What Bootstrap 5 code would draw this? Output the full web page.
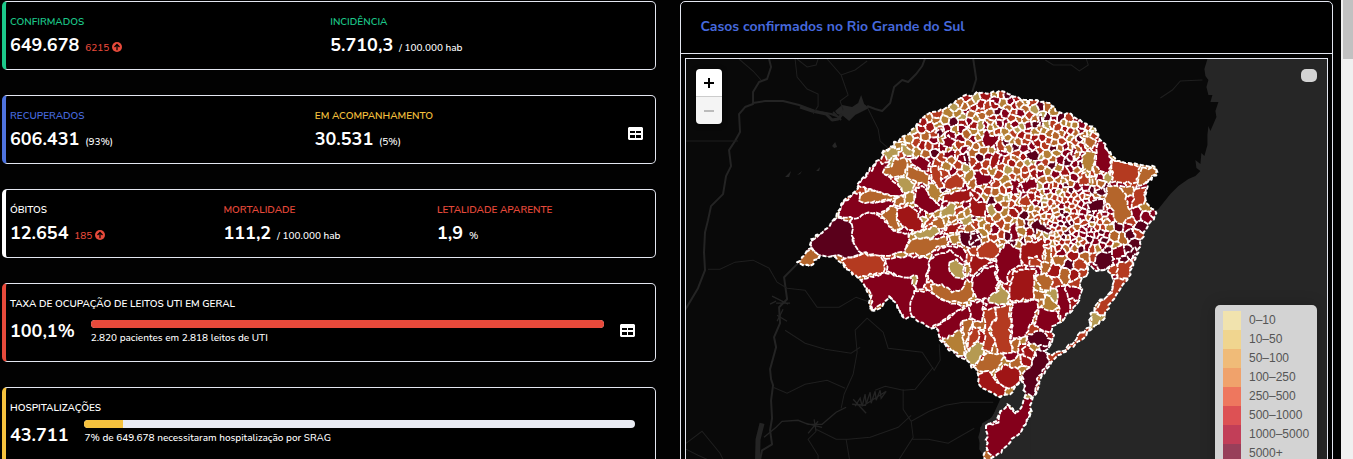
<!DOCTYPE html>
<html lang="pt-BR">
<head>
<meta charset="utf-8">
<meta name="viewport" content="width=device-width, initial-scale=1">
<title>Painel Coronavírus RS</title>
<link href="https://cdn.jsdelivr.net/npm/bootstrap@5.3.0/dist/css/bootstrap.min.css" rel="stylesheet">
<style>
body{background:#020202;color:#fff;font-family:Nunito,"Open Sans",sans-serif}
.page{padding:1px 0 0 2px}
.cols{gap:24px;padding-right:8px}
.panel{background:#000;border:1px solid #e3e6f0;border-radius:5px}
.stat{border-left:4px solid;min-height:69px;padding:12px 4px 6px;margin-bottom:25px}
.stat-tall{min-height:79px}
.stat .row>*{padding:0}
.edge-green{border-left-color:#1cc88a}
.edge-blue{border-left-color:#4e73df}
.edge-white{border-left-color:#fff}
.edge-red{border-left-color:#e74a3b}
.edge-yellow{border-left-color:#f6c23e}
.lbl{font-size:10px;line-height:16px;font-weight:600}
.num{font-size:18px;line-height:30px;height:32px;font-weight:700;white-space:nowrap}
.num small{font-size:10px;font-weight:500;margin-left:1px}
.t-green{color:#1cc88a}.t-blue{color:#4669dc}.t-yellow{color:#f6c23e}.t-red{color:#e74a3b}
.note{font-size:10px;line-height:12px;font-weight:500}
.progress{height:8px;border-radius:6px;background:#eaecf4}
.icon-btn{background:none;border:0;padding:0;line-height:0;color:#fff}
.arrow{width:10px;height:10px;vertical-align:-1px}
.map-head{height:52px;padding:0 20px;border-bottom:1px solid #e3e6f0;font-size:14px;font-weight:700}
.map-box{height:422px;border:1px solid #e3e6f0;background:#090909}
.map-box>svg{width:100%;height:100%;display:block}
.zoom-ctl{left:10px;top:10px;width:26px;border-radius:4px;overflow:hidden;box-shadow:0 1px 5px rgba(0,0,0,.65)}
.zoom-ctl button{width:26px;height:27px;border:0;padding:0;background:#fff;color:#000;line-height:0}
.zoom-ctl button+button{border-top:1px solid #ccc;height:28px;background:#f4f4f4;color:#bbb}
.info-ctl{right:10px;top:10px;width:16px;height:13px;border-radius:5px;background:#d3d3d3}
.legend-ctl{right:10px;bottom:10px;width:102px;padding:6px 8px;border-radius:5px;background:#d3d3d3;color:#555;font:12px/19px "Liberation Sans",Arial,sans-serif;white-space:nowrap;box-shadow:0 0 15px rgba(0,0,0,.2)}
.swatch{width:18px;height:19px;flex-shrink:0}
.scroller{width:12px;background:#f0f0f0;padding-left:2px}
.thumb{height:59px;background:#c1c1c1}
#cells path,#towns path,#outline path{stroke:#fff;stroke-width:1.8;stroke-dasharray:5 1;stroke-linejoin:round}
#outline path{fill:none;stroke-width:2;stroke-dasharray:4 2}
</style>
</head>
<body>
<div class="d-flex vh-100 overflow-hidden">
<main class="page flex-fill">
<div class="cols d-flex">
<section class="flex-fill w-50">
  <div class="panel stat edge-green">
    <div class="row g-0">
      <div class="col"><div class="lbl t-green">CONFIRMADOS</div><div class="num">649.678 <small class="t-red">6215 <svg class="arrow" viewBox="0 0 16 16"><circle cx="8" cy="8" r="8" fill="#e74a3b"/><path d="M8 13V4M4 8l4-4 4 4" fill="none" stroke="#000" stroke-width="2"/></svg></small></div></div>
      <div class="col"><div class="lbl t-green">INCIDÊNCIA</div><div class="num">5.710,3 <small>/ 100.000 hab</small></div></div>
    </div>
  </div>
  <div class="panel stat edge-blue">
    <div class="row g-0 align-items-center">
      <div class="col"><div class="lbl t-blue">RECUPERADOS</div><div class="num">606.431 <small>(93%)</small></div></div>
      <div class="col"><div class="lbl t-yellow">EM ACOMPANHAMENTO</div><div class="num">30.531 <small>(5%)</small></div></div>
      <div class="col-auto"><button class="icon-btn mx-2" type="button" aria-label="Tabela"><svg width="15" height="13" viewBox="0 0 15 13"><path fill="currentColor" fill-rule="evenodd" d="M1 0h13l1 1v11l-1 1H1l-1-1V1zM2 4v2h5V4zm6 0v2h5V4zM2 8v3h5V8zm6 0v3h5V8z"/></svg></button></div>
    </div>
  </div>
  <div class="panel stat edge-white">
    <div class="row g-0">
      <div class="col"><div class="lbl">ÓBITOS</div><div class="num">12.654 <small class="t-red">185 <svg class="arrow" viewBox="0 0 16 16"><circle cx="8" cy="8" r="8" fill="#e74a3b"/><path d="M8 13V4M4 8l4-4 4 4" fill="none" stroke="#000" stroke-width="2"/></svg></small></div></div>
      <div class="col"><div class="lbl t-red">MORTALIDADE</div><div class="num">111,2 <small>/ 100.000 hab</small></div></div>
      <div class="col"><div class="lbl t-red">LETALIDADE APARENTE</div><div class="num">1,9 <small>%</small></div></div>
    </div>
  </div>
  <div class="panel stat stat-tall edge-red">
    <div class="lbl">TAXA DE OCUPAÇÃO DE LEITOS UTI EM GERAL</div>
    <div class="d-flex align-items-center">
      <div class="num me-3 mt-1">100,1%</div>
      <div class="flex-fill pt-1"><div class="progress" role="progressbar" aria-label="Leitos UTI"><div class="progress-bar" style="width:100%;background:#e74a3b"></div></div><div class="note mt-1">2.820 pacientes em 2.818 leitos de UTI</div></div>
      <button class="icon-btn mx-3" type="button" aria-label="Tabela"><svg width="15" height="13" viewBox="0 0 15 13"><path fill="currentColor" fill-rule="evenodd" d="M1 0h13l1 1v11l-1 1H1l-1-1V1zM2 4v2h5V4zm6 0v2h5V4zM2 8v3h5V8zm6 0v3h5V8z"/></svg></button>
    </div>
  </div>
  <div class="panel stat stat-tall edge-yellow">
    <div class="lbl">HOSPITALIZAÇÕES</div>
    <div class="d-flex align-items-start">
      <div class="num me-3 mt-1">43.711</div>
      <div class="flex-fill me-3 pt-1"><div class="progress" role="progressbar" aria-label="Hospitalizações"><div class="progress-bar" style="width:7%;background:#f6c23e"></div></div><div class="note mt-1">7% de 649.678 necessitaram hospitalização por SRAG</div></div>
    </div>
  </div>
</section>
<section class="flex-fill w-50">
  <div class="panel">
    <h6 class="map-head t-blue d-flex align-items-center m-0">Casos confirmados no Rio Grande do Sul</h6>
    <div class="p-1 pb-4">
    <div class="map-box position-relative overflow-hidden" id="map">
      <svg viewBox="686 60 641 420" preserveAspectRatio="xMidYMin slice" role="img" aria-label="Mapa">
        <path fill="#262626" d="M1207 60L1204 70 1205 77 1208 81 1206 88 1208 96 1212 96 1210 103 1218 103 1215 112 1216 118 1213 125 1210 132 1208 127 1207 136 1207 146 1204 157 1201 154 1200 165 1195 161 1196 169 1200 172 1195 177 1188 180 1178 187 1170 195 1158 210 1154 213 1110 250 1085 265 1050 330 1040 355 1020 380 1003 400 990 420 980 428 979 450 985 459 975 482 1330 482V60z"/>
        <path fill="#262626" d="M1010 392L1000 400 992 418 982 424 978 438 982 452 985 470H1030V400z"/>
        <path fill="#262626" d="M804 79l-12 6M835 112l7-6 10 2 6-4 3-8 3 9 5 4-6 3-8 4-6 6-6-5-6-2zM832 147l3-4 2 5-3 1zM785 178l6-6-2 6zM797 176l5-4-2 3zM816 172l4-4-1 4z"/>
        <g fill="none" stroke="#242424" stroke-width="2" stroke-linejoin="round">
          <path d="M769 60l2 8-4 12-8 3-6 10 0 12-8 3-6 7 1 18-5 9-6 9 2 16-5 10-3 18-12 12-3 14-3 12-1 20 1 18-7 18-13 22M753 104l12-2 18 0 16 4 16 6 16 3 8 3M833 113l8 8M867 107l8 3 7 2 8-8 4-16 8-7 6 2 8-8 6-8 3-8 12-5M973 60l3 20-4 13"/>
          <path stroke-width="3" d="M800 108l12 4 14 3 6 6 6-1 4-5"/>
          <path d="M798 264l-14 14 3 22-8 8 1 16-6 14 2 10-6 22 1 10 2 6-2 15 1 18-2 12 2 14-10 6-3 14"/>
          <path stroke-width="5" d="M762 424l-4 16-1 40"/>
        </g>
        <g fill="none" stroke="#242424" stroke-width="1.3">
          <path d="M776 304l14 0m-14-2l-6 3m2-8l16 8M777 316l10 6m-4-12l-6 12M764 438l12-10 6-6 16-1 10 4 14 0 14-12 10-5M852 405l14 1M853 400l13 14m-11-7l5-8 2 8 3-12 1 10 4-12 1 11 4-12 1 9 4-10 1 8 5-7-22 14M806 424l16 4m-14 6l10-12m-4-2l2 12"/>
        </g>
        <g fill="none" stroke="#1f1f1f" stroke-width="1">
          <path d="M686 142h52M739 60l14 12 8 9M795 60l2 18 10 12 11 5v12l-5 8M797 60l10 8 9-2 2-6M827 60l14 16 14-5 12-9M841 76l7 20-8 6 3 9M868 110l10 20 2 12 8 7M1045 61l8 5 18 0 8 6 9-6-2-6M1160 99l12-8 8-9 22-1"/>
          <path d="M708 270l12 0 15-7 18-2 16 8 8 14 10 6 18 2 12 17 22 0 17-10 14 5M785 331l20 13 20 6 26 4 9-6M867 319l-12 12 2 22-4 22-9 20-3 14M867 319l16 14 5 16 34 4 12 18 6-10-1-16M933 368l-18 22-12 1-18-4-10 4M773 388l14 6 18-9 22-4 18 8M903 390l0 20 8 12 18-10 16-6 18-3 30 0M911 422l2 16-14 22M816 430l20 10 12 0 22-2 28-10 13-12M912 440l16 0 20 4 26-15M816 432l-8 8 10 16v20M846 440l5 30M686 444l16-12 18 22 8 16M686 450l12 6 18 8"/>
        </g>
        <defs><clipPath id="rs"></clipPath></defs>
        <g clip-path="url(#rs)"><rect x="780" y="80" width="400" height="400" fill="#fff"/><g id="cells"></g><g id="towns"></g></g>
        <g id="outline"></g>
      </svg>
      <div class="zoom-ctl position-absolute"><button type="button" aria-label="Aproximar"><svg width="12" height="12"><path d="M6 1v10M1 6h10" stroke="currentColor" stroke-width="2"/></svg></button><button type="button" aria-label="Afastar"><svg width="12" height="12"><path d="M1 6h10" stroke="currentColor" stroke-width="2"/></svg></button></div>
      <div class="info-ctl position-absolute"></div>
      <div class="legend-ctl position-absolute" id="legend"></div>
    </div>
    </div>
  </div>
</section>
</div>
</main>
<div class="scroller flex-shrink-0" aria-hidden="true"><div class="thumb"></div></div>
</div>
<script src="https://cdn.jsdelivr.net/npm/bootstrap@5.3.0/dist/js/bootstrap.bundle.min.js"></script>
<script>
const legend = [['0–10','#f1e3ae'],['10–50','#f0d58f'],['50–100','#f0bb78'],['100–250','#f0a26b'],['250–500','#ee775e'],['500–1000','#dd5154'],['1000–5000','#c23e58'],['5000+','#983f5a']];
document.getElementById('legend').innerHTML = legend.map(([t,c]) => `<div class="d-flex"><span class="swatch me-2" style="background:${c}"></span>${t}</div>`).join('');

const fills = {D:'#5a001b',R:'#84001b',M:'#9f1516',O:'#b43a20',B:'#b4652b',Y:'#b47f35',K:'#b59a52',W:'#262626'};
const nums = s => s.trim().split(/[ ,]+/).map(Number);
const pairs = s => { const n = nums(s), r = []; for (let i = 0; i < n.length; i += 2) r.push([n[i], n[i+1]]); return r; };

// State border and the lagoon inside it
const border = pairs('797,263 802,258 811,249 811,240 824,231 836,218 841,205 858,189 857,186 876,162 881,160 882,154 900,140 909,135 912,130 924,118 925,116 944,110 954,104 963,97 980,94 990,94 1005,93 1020,100 1030,101 1050,104 1058,113 1071,115 1080,121 1095,130 1100,141 1110,153 1116,162 1125,164 1141,166 1155,168 1157,173 1146,184 1145,200 1149,207 1156,214 1147,228 1141,240 1135,260 1128,278 1118,293 1108,306 1105,318 1090,331 1075,345 1057,356 1048,368 1040,380 1037,392 1032,400 1030,415 1022,430 1010,443 995,457 985,463 984,454 987,450 986,425 996,422 1000,412 1007,405 1014,413 1018,412 1025,396 1022,378 1018,385 1010,395 1000,398 985,390 978,383 977,372 965,360 955,355 942,343 938,331 925,326 914,318 905,320 895,303 889,297 880,309 870,311 869,295 858,279 843,265 832,257 820,256 810,267');
const lagoon = pairs('1086,277 1088,270 1085,262 1090,266 1096,272 1108,268 1111,275 1112,286 1106,298 1098,303 1094,312 1090,314 1090,328 1080,333 1072,345 1062,352 1052,356 1044,352 1050,346 1052,342 1052,327 1065,318 1073,308 1079,301 1082,290 1080,283');

// Larger municipalities: [origin x, origin y, outlines in thirds of a unit]
const areas = [[790,80,`D 65,485 85,470 105,450 140,415 155,418 180,430 190,450 188,490 215,525 190,532 165,540 145,528 110,535 92,530 65,505
B 20,545 45,520 65,508 88,530 85,555 55,562 30,555
R 190,415 235,400 265,408 300,440 315,455 355,462 358,485 345,520 310,525 285,530 250,525 215,522 190,490 188,450 180,425
R 145,412 152,380 190,340 210,340 215,365 250,372 315,365 310,380 270,405 235,400 200,418 160,415
R 195,320 250,265 262,240 275,255 300,250 280,280 300,295 312,310 335,335 345,345 325,352 300,350 230,330
B 210,350 235,335 300,350 325,352 300,362 225,372 207,365
K 275,225 300,208 328,208 325,230 290,242
B 312,238 345,235 352,265 340,290 305,295 278,280 285,265 305,262
K 335,195 372,215 370,235 350,232 335,215
R 358,240 395,232 420,250 415,275 395,278 365,255
B 352,262 418,288 415,320 385,312 348,295
K 312,298 345,295 375,315 365,340 345,342 325,320
R 375,325 395,320 420,345 440,370 455,380 440,395 415,405 370,375
Y 345,345 370,340 372,365 345,378 340,365
B 315,360 335,348 342,375 315,380
Y 418,312 440,320 458,345 438,372 415,345
O 425,262 445,262 462,325 445,330 425,300
O 470,300 500,282 520,300 518,325 480,332 462,325
M 462,345 540,325 568,345 560,365 500,370 458,368
Y 525,285 545,268 552,290 535,315 522,305
B 272,408 300,380 322,388 320,425 330,450 310,455 290,425
M 322,388 360,380 385,405 400,450 375,460 335,440 320,420
K 365,465 400,455 435,440 450,460 425,478 390,480
B 345,510 370,480 430,478 470,472 475,495 440,502 405,530 345,522
K 455,390 480,370 498,380 490,410 460,415 450,405
O 405,430 430,405 440,420 405,445
K 508,420 545,405 550,430 520,440
M 450,465 480,435 515,430 500,460
D 505,460 560,452 575,470 575,495 540,508 510,490
Y 478,470 508,465 512,490 485,495
R 425,520 450,505 510,500 530,525 520,560 470,570 430,560 420,540
R 455,180 475,168 495,190 485,208 460,200
R 455,215 495,215 495,235 460,235
D 520,225 535,205 540,260 525,255
D 435,160 455,150 460,165 445,175
O 155,542 215,525 270,530 285,550 280,580 220,590 200,600 170,570`],
[790,260,`R 205,65 285,42 330,50 360,55 378,90 372,130 365,195 345,185 298,112 290,130 245,155 240,100
R 285,0 350,-10 425,0 415,15 410,60 400,90 378,90 380,50 340,55 290,35
R 420,0 480,-30 530,10 550,40 545,65 515,95 480,100 430,75 415,60
K 478,10 500,0 522,25 518,60 495,55 478,35
Y 522,15 545,15 545,35 525,55
B 420,78 455,75 485,100 515,90 530,60 548,70 548,115 520,132 465,125 425,98
R 372,95 420,95 465,125 522,140 485,165 455,185 425,208 400,215 365,190 360,140
R 425,208 490,165 560,120 590,135 575,185 545,190 515,185 515,215 460,245
Y 455,245 510,213 525,240 522,290 505,290
B 517,185 548,182 535,220 530,265 520,245
O 545,200 570,205 565,240 535,275 535,240
K 525,290 560,245 585,255 580,285 550,318 530,305`],
[970,230,`R 75,85 110,40 150,60 155,110 120,125 110,165 85,150
R 5,150 40,115 75,110 80,150 80,185 55,210 20,210 5,180
K 85,155 115,190 115,220 85,228 55,220 60,200 85,185
M 130,125 195,120 190,210 120,215 118,170
B 195,145 225,130 248,160 240,185 210,180
B 190,180 220,190 225,210 190,210
B 225,55 243,55 243,100 225,98
M 155,45 220,30 220,100 170,110 150,90
O 175,85 200,80 215,115 180,112
M 0,75 45,85 65,100 20,130 0,140
O 20,60 60,30 90,60 70,90 25,85
R 125,220 205,215 195,260 175,295 165,325 120,328 125,270
R 205,235 265,250 270,285 240,310 190,290
R 255,175 285,170 300,240 290,275 270,270
O 35,240 75,235 80,260 55,300 75,340 65,365 35,360 45,300
O 75,235 120,225 120,320 125,370 80,375 75,340 60,295 80,265
R 0,215 40,220 35,280 0,265
B 20,405 50,372 100,375 85,420 45,430 10,420
M 25,435 55,425 80,460 110,475 105,498 80,505 20,470
M 75,430 105,405 145,420 150,455 115,478 85,460
B 125,335 150,330 145,365 125,365
Y 155,325 170,320 165,345 148,345
D 175,315 215,305 242,330 235,350 200,352 172,335
D 200,360 225,365 240,400 205,440 195,500 165,498 155,440 185,405
R 40,585 85,580 92,530 115,525 135,552 160,505 190,505 178,560 158,605 115,650 75,690 45,655
M 155,360 175,345 195,370 185,395 160,380
D 380,75 430,65 430,105 390,125 370,105
R 425,60 460,45 465,80 430,90
D 465,75 495,55 500,75 475,90
O 445,100 485,95 480,148 440,150
O 430,150 475,150 445,210 415,262 370,250 390,215 425,190
K 362,250 412,262 355,315
O 360,305 320,315 285,355 235,375 235,405 290,385 335,350 365,310`],
[970,80,`R 35,180 50,150 60,170 90,165 75,195 65,205 45,205
D 165,225 195,210 208,230 200,245 170,235
R 375,260 380,200 395,180 425,240 415,290
O 425,240 510,262 500,310 425,310
B 515,265 565,270 530,305 505,320 505,290
B 412,320 440,320 470,345 465,360 485,405 455,435 435,425 430,395 405,370
B 450,320 490,325 490,350 470,355
D 350,370 400,360 400,395 355,400
D 375,335 400,320 408,345 390,350
O 495,330 525,325 520,375 485,390
Y 335,230 350,215 375,220 365,275 335,275
O 325,300 345,280 358,300 350,318 330,320
B 362,290 380,290 380,320 365,320
K 340,150 370,155 355,180
K 400,290 415,278 428,295 415,315 400,305
B 340,170 378,185 365,215 350,200
R 305,200 318,215 310,245 302,225
D 205,110 212,105 220,140 208,140
O 80,190 95,175 108,220 85,215
M 60,245 75,215 92,225 75,265 62,270
R 122,300 145,300 145,345 122,345
R 150,312 195,295 202,325 160,340
R 10,275 65,290 60,310 20,320
O 145,370 170,345 185,375 160,380
M 0,340 25,370 50,370 45,415 0,405
K 50,385 70,375 80,400 65,415
R 120,440 140,430 145,480 120,485
D 180,440 200,420 245,455 235,465 200,450 195,480
D 0,465 20,455 30,480 0,500
K 100,350 115,345 120,365 100,365`]];

let seed = 4711;
const rnd = () => (seed = (seed * 16807) % 2147483647) / 2147483647;
const inside = (p, poly) => { let c = false; for (let i = 0, j = poly.length - 1; i < poly.length; j = i++) { const a = poly[i], b = poly[j]; if ((a[1] > p[1]) !== (b[1] > p[1]) && p[0] < (b[0]-a[0])*(p[1]-a[1])/(b[1]-a[1])+a[0]) c = !c; } return c; };

// Rough edges: the shift depends only on the two ends, so neighbours share a line
function rough(poly, k) {
  const out = [];
  poly.forEach((a, i) => {
    const b = poly[(i+1) % poly.length], len = Math.hypot(b[0]-a[0], b[1]-a[1]);
    out.push(a);
    const n = Math.floor(len / 3), flip = a[0] > b[0] || (a[0] === b[0] && a[1] > b[1]);
    for (let q = 1; q < n; q++) {
      const t = q / n, x = a[0]+(b[0]-a[0])*t, y = a[1]+(b[1]-a[1])*t;
      const h = Math.sin(Math.round(x*4)*12.9898 + Math.round(y*4)*78.233) * 43758.5453;
      const s = ((h - Math.floor(h)) - .5) * k * (flip ? -1 : 1);
      out.push([x - (b[1]-a[1])/len*s, y + (b[0]-a[0])/len*s]);
    }
  });
  return out;
}
const d = poly => 'M' + poly.map(p => p[0].toFixed(1) + ' ' + p[1].toFixed(1)).join('L') + 'Z';

const big = [];
areas.forEach(([ox, oy, txt]) => txt.split('\n').forEach(l => big.push([l[0], pairs(l.slice(2)).map(p => [ox+p[0]/3, oy+p[1]/3])])));

function spacing(x, y) {
  if (x > 1035 && x < 1110 && y > 185 && y < 250) return 3.8;
  if (y < 160 && x > 960 && x < 1080) return 5;
  if (y > 290) return 11;
  if (x > 1110) return 8;
  if (x > 1000 && y < 250) return 5.5;
  if (y > 240 || x < 900) return 9;
  return 6;
}
const seeds = [];
for (let i = 0; i < 26000; i++) {
  const p = [795 + rnd()*365, 90 + rnd()*370];
  if (!inside(p, border) || inside(p, lagoon) || big.some(b => inside(p, b[1]))) continue;
  const s = spacing(p[0], p[1]) * (.8 + rnd()*.6);
  if (seeds.every(q => Math.hypot(q[0]-p[0], q[1]-p[1]) > s)) seeds.push(p);
}
function cell(p) {
  let poly = [[p[0]-18,p[1]-18],[p[0]+18,p[1]-18],[p[0]+18,p[1]+18],[p[0]-18,p[1]+18]];
  for (const q of seeds) {
    if (q === p || Math.hypot(q[0]-p[0], q[1]-p[1]) > 50) continue;
    const mx = (p[0]+q[0])/2, my = (p[1]+q[1])/2, nx = q[0]-p[0], ny = q[1]-p[1], out = [];
    const f = v => (v[0]-mx)*nx + (v[1]-my)*ny;
    poly.forEach((a, i) => { const b = poly[(i+1) % poly.length], fa = f(a), fb = f(b);
      if (fa <= 0) out.push(a);
      if ((fa < 0 && fb > 0) || (fa > 0 && fb < 0)) { const t = fa/(fa-fb); out.push([a[0]+(b[0]-a[0])*t, a[1]+(b[1]-a[1])*t]); } });
    poly = out;
  }
  return poly;
}
const mix = 'RRRMMOOOOBBBBBYYYKD', mixEast = 'RRRRDDMMOOOBBY';
document.getElementById('cells').innerHTML = seeds.map(p => {
  const m = p[0] > 1060 && p[1] > 175 ? mixEast : mix;
  return `<path fill="${fills[m[Math.floor(rnd()*m.length)]]}" d="${d(rough(cell(p), 3))}"/>`;
}).join('');
const edge = d(rough(border, 3)), water = d(rough(lagoon, 4));
document.getElementById('towns').innerHTML = big.map(b => `<path fill="${fills[b[0]]}" d="${d(rough(b[1], 3))}"/>`).join('') + `<path fill="#262626" d="${water}"/>`;
document.getElementById('rs').innerHTML = `<path d="${edge}"/>`;
document.getElementById('outline').innerHTML = `<path d="${edge}"/>`;
</script>
</body>
</html>
